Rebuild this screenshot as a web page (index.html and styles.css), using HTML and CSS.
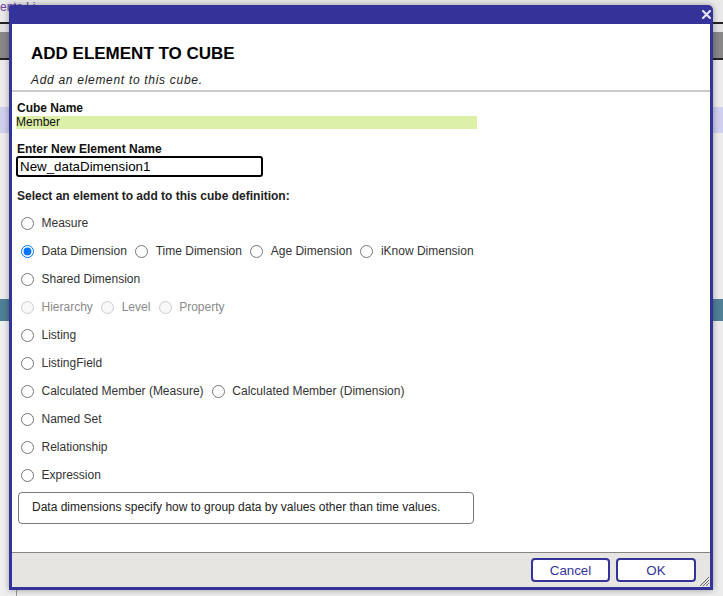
FILE: index.html
```html
<!DOCTYPE html>
<html>
<head>
<meta charset="utf-8">
<link rel="stylesheet" href="styles.css">
</head>
<body>
<div class="page">
  <div class="topnav"><span class="crumb">ents Li</span></div>
  <div class="bar-light"></div>
  <div class="bar-dark"></div>
  <div class="gap1"></div>
  <div class="lav"></div>
  <div class="gap2"></div>
  <div class="teal"></div>
  <div class="rest"></div>
</div>

<div class="dialog">
  <div class="titlebar">
    <svg class="close" width="9" height="9" viewBox="0 0 9 9"><path d="M1 1L8 8M8 1L1 8" stroke="#e4e4f4" stroke-width="2.2" stroke-linecap="square"/></svg>
  </div>
  <div class="dbody">
    <div class="dhead">
      <h1 class="dtitle">ADD ELEMENT TO CUBE</h1>
      <div class="dsub">Add an element to this cube.</div>
    </div>
    <div class="form">
      <div class="lbl">Cube Name</div>
      <div class="cubename">Member</div>
      <div class="lbl lbl2">Enter New Element Name</div>
      <input class="name" type="text" value="New_dataDimension1">
      <div class="lbl lbl3">Select an element to add to this cube definition:</div>
      <div class="opts">
        <div class="row"><label class="opt"><input type="radio" name="e">Measure</label></div>
        <div class="row">
          <label class="opt"><input type="radio" name="e" checked>Data Dimension</label>
          <label class="opt"><input type="radio" name="e">Time Dimension</label>
          <label class="opt"><input type="radio" name="e">Age Dimension</label>
          <label class="opt"><input type="radio" name="e">iKnow Dimension</label>
        </div>
        <div class="row"><label class="opt"><input type="radio" name="e">Shared Dimension</label></div>
        <div class="row dis">
          <label class="opt"><input type="radio" name="e" disabled>Hierarchy</label>
          <label class="opt"><input type="radio" name="e" disabled>Level</label>
          <label class="opt"><input type="radio" name="e" disabled>Property</label>
        </div>
        <div class="row"><label class="opt"><input type="radio" name="e">Listing</label></div>
        <div class="row"><label class="opt"><input type="radio" name="e">ListingField</label></div>
        <div class="row">
          <label class="opt"><input type="radio" name="e">Calculated Member (Measure)</label>
          <label class="opt"><input type="radio" name="e">Calculated Member (Dimension)</label>
        </div>
        <div class="row"><label class="opt"><input type="radio" name="e">Named Set</label></div>
        <div class="row"><label class="opt"><input type="radio" name="e">Relationship</label></div>
        <div class="row"><label class="opt"><input type="radio" name="e">Expression</label></div>
      </div>
      <div class="desc">Data dimensions specify how to group data by values other than time values.</div>
    </div>
  </div>
  <div class="dfoot">
    <button class="btn">Cancel</button>
    <button class="btn">OK</button>
    <svg class="grip" width="11" height="11" viewBox="0 0 11 11"><path d="M10 1L1 10M10 4L4 10M10 7L7 10" stroke="#666" stroke-width="1"/></svg>
  </div>
</div>
</body>
</html>
```

FILE: styles.css
```css
html, body {
  margin: 0;
  padding: 0;
}
body {
  background: #efefef;
  font-family: "Liberation Sans", Arial, sans-serif;
  width: 723px;
  height: 596px;
  overflow: hidden;
  position: relative;
}
.page {
  display: flex;
  flex-direction: column;
  height: 596px;
}
.topnav {
  height: 22px;
  background: #e9e9e9;
  font-size: 12px;
  line-height: 14px;
}
.crumb {
  color: #6a3fa0;
  margin-left: 0;
}
.bar-light {
  height: 8px;
  border-top: 2px solid #222;
  background: #e2e2e2;
}
.bar-dark {
  height: 26px;
  background: #878787;
  border-bottom: 2px solid #222;
}
.gap1 {
  height: 47px;
  background: #ececec;
}
.lav {
  height: 26px;
  background: #cfcfee;
}
.gap2 {
  height: 166px;
  background: #ececec;
}
.teal {
  height: 22px;
  background: #4f7f94;
}
.rest {
  flex: 1;
  background: #ececec;
  margin-left: 16px;
  border-left: 1px solid #999;
}

.dialog {
  position: absolute;
  left: 9px;
  top: 5px;
  width: 704px;
  height: 585px;
  box-sizing: border-box;
  background: #333399;
  border: 3px solid #333399;
  border-top: 0;
  border-radius: 2px 5px 0 0;
  box-shadow: 0 0 6px rgba(0, 0, 0, 0.35);
  display: flex;
  flex-direction: column;
}
.titlebar {
  height: 19px;
  display: flex;
  justify-content: flex-end;
  align-items: center;
  margin-right: -1px;
}
.close {
  display: block;
}
.dbody {
  flex: 1;
  background: #fff;
  display: flex;
  flex-direction: column;
}
.dhead {
  padding: 20px 0 3px 19px;
  border-bottom: 2px solid #cacaca;
}
.dtitle {
  margin: 0;
  font-size: 17px;
  line-height: 20px;
  font-weight: bold;
  color: #000;
}
.dsub {
  margin-top: 9px;
  font-size: 12px;
  line-height: 14px;
  font-style: italic;
  letter-spacing: 0.7px;
  color: #222;
}
.form {
  padding: 9px 0 0 4px;
}
.lbl {
  font-size: 12px;
  line-height: 14px;
  font-weight: bold;
  color: #111;
  padding-left: 1px;
}
.lbl2 {
  margin-top: 13px;
}
.lbl3 {
  margin-top: 12px;
  color: #222;
}
.cubename {
  margin-top: 1px;
  width: 461px;
  height: 13px;
  line-height: 13px;
  font-size: 12px;
  background: #dcf0a8;
  color: #111;
}
.name {
  display: block;
  box-sizing: border-box;
  width: 247px;
  height: 21px;
  margin: 0;
  border: 2px solid #000;
  border-radius: 3px;
  padding: 0 2px;
  font-family: "Liberation Sans", Arial, sans-serif;
  font-size: 13.333px;
  color: #000;
  outline: none;
}
.opts {
  margin-top: 6px;
}
.row {
  height: 28px;
  display: flex;
  align-items: center;
  gap: 3.3px;
  font-size: 12px;
  color: #333;
}
.opt {
  display: inline-flex;
  align-items: center;
}
.opt input {
  width: 13px;
  height: 13px;
  margin: 0 7.5px 0 5px;
}
.dis {
  color: #8a8a8a;
}
.desc {
  margin: 3px 0 0 2px;
  width: 456px;
  height: 32px;
  box-sizing: border-box;
  border: 1px solid #7a7a7a;
  border-radius: 4px;
  padding: 0 0 0 13px;
  font-size: 12px;
  line-height: 28px;
  color: #222;
}
.dfoot {
  position: relative;
  background: #e7e5e1;
  border-top: 1px solid #858585;
  padding: 5px 14px 5px 0;
  display: flex;
  justify-content: flex-end;
  gap: 6px;
}
.btn {
  box-sizing: border-box;
  width: 79px;
  height: 24px;
  margin: 0;
  padding: 0;
  background: #fff;
  border: 2px solid #333399;
  border-radius: 4px;
  color: #333399;
  font-family: "Liberation Sans", Arial, sans-serif;
  font-size: 13.333px;
}
.btn + .btn {
  width: 80px;
}
.grip {
  position: absolute;
  right: 0;
  bottom: 0;
}
```
